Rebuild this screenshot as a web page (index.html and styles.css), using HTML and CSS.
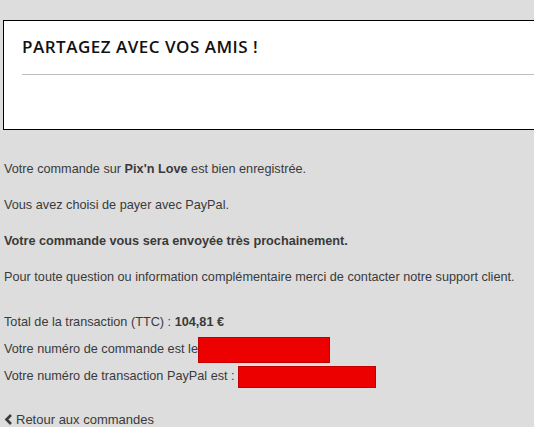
FILE: index.html
```html
<!DOCTYPE html>
<html lang="fr">
<head>
    <meta charset="UTF-8">
    <title>Commande</title>
    <link rel="stylesheet" href="styles.css">
</head>
<body>
<div class="share">
    <h2 class="share_title">PARTAGEZ AVEC VOS AMIS !</h2>
    <hr class="share_line">
</div>
<div class="content">
    <p>Votre commande sur <b>Pix'n Love</b> est bien enregistrée.</p>
    <p>Vous avez choisi de payer avec PayPal.</p>
    <p><b>Votre commande vous sera envoyée très prochainement.</b></p>
    <p>Pour toute question ou information complémentaire merci de contacter notre support client.</p>
    <div class="recap">
        <div class="row">Total de la transaction (TTC) : <b>104,81 €</b></div>
        <div class="row">Votre numéro de commande est le<span class="mask mask1"></span></div>
        <div class="row">Votre numéro de transaction PayPal est : <span class="mask mask2"></span></div>
    </div>
    <a class="back" href="#"><svg class="chev" width="9" height="11" viewBox="0 0 9 11"><path d="M7 1 L2.5 5.5 L7 10" fill="none" stroke="#3a3a3a" stroke-width="2.6"/></svg>Retour aux commandes</a>
</div>
</body>
</html>
```
FILE: styles.css
```css
*{
    margin: 0;
    padding: 0;
}
html, body{
    background-color: #dddddd;
    overflow: hidden;
}
body{
    font-family: "Liberation Sans", Arial, sans-serif;
    font-size: 12.7px;
    color: #3a3a3a;
}
/*partage*/
.share{
    width: 560px;
    height: 110px;
    margin: 20px 0 0 3px;
    border: 1px solid #000;
    background-color: #fff;
    padding: 0 0 0 18px;
    box-sizing: border-box;
}
.share_title{
    font-family: "Open Sans", sans-serif;
    font-weight: 600;
    font-size: 17px;
    letter-spacing: 0.5px;
    color: #111;
    padding-top: 15px;
    line-height: 22px;
}
.share_line{
    border: 0;
    border-top: 1px solid #bdbdbd;
    margin-top: 16px;
}
/*texte*/
.content{
    padding: 31px 0 0 4px;
}
.content p{
    line-height: 16px;
    margin-bottom: 20px;
}
.recap{
    padding-top: 4px;
}
.recap .row{
    height: 27px;
    line-height: 27px;
}
.mask{
    display: inline-block;
    vertical-align: middle;
    background-color: #ec0000;
    border: 1px solid #c30000;
    box-sizing: border-box;
}
.mask1{
    width: 132px;
    height: 26px;
}
.mask2{
    width: 138px;
    height: 22px;
}
.back{
    display: block;
    margin-top: 22px;
    font-size: 13px;
    color: #3a3a3a;
    text-decoration: none;
}
.chev{
    vertical-align: -1px;
    margin-right: 3px;
}
```
